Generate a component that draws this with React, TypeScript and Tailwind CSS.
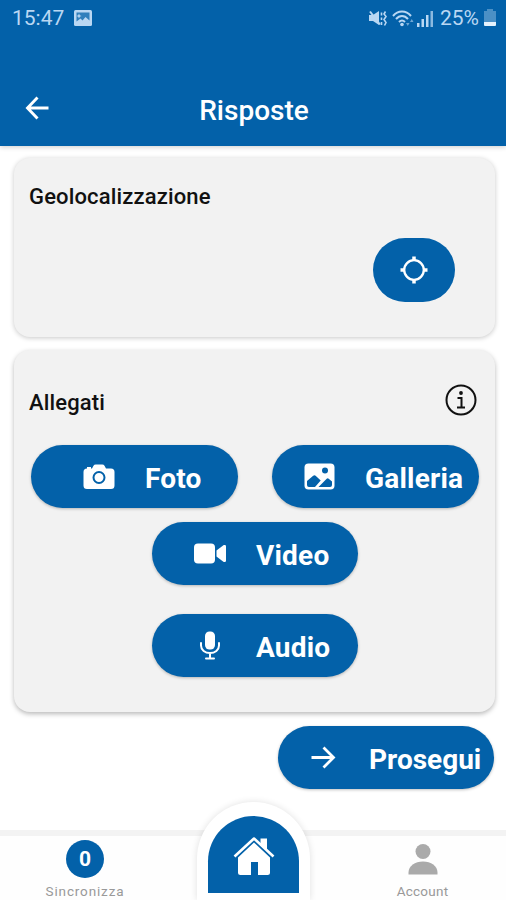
import type { ReactNode } from "react"

type ActionButtonProps = {
    label: string,
    icon: ReactNode,
    className: string
}

const ActionButton = ({ label, icon, className }: ActionButtonProps) => {
    return (
        <button className={`h-[63px] flex items-center rounded-full bg-[#0361a9] text-white shadow-[0_1px_3px_rgba(0,0,0,0.25)] ${className}`}>
            <span className="w-8 shrink-0 flex justify-center">{icon}</span>
            <span className="ml-[30px] mt-[5px] text-[28px] leading-8 font-bold whitespace-nowrap">{label}</span>
        </button>
    )
}

const CameraIcon = () => (
    <svg width="32" height="26" viewBox="0 0 32 26" fill="none">
        <path fill="#fff" fillRule="evenodd" d="M4 4.500h5l1.500-2.700A2.500 2.500 0 0 1 12.700.5h6.600a2.500 2.500 0 0 1 2.200 1.300L23 4.500h5A3.500 3.500 0 0 1 31.500 8v13.500A3.500 3.500 0 0 1 28 25H4a3.500 3.500 0 0 1-3.500-3.500V8A3.500 3.500 0 0 1 4 4.500z" />
        <path fill="#fff" d="M4 3h4v3H4z" />
        <circle cx="16" cy="13.500" r="5.500" stroke="#0361a9" strokeWidth="2" />
    </svg>
)

const GalleryIcon = () => (
    <svg width="31" height="27" viewBox="0 0 31 27">
        <rect x=".5" y=".5" width="30" height="26" rx="4" fill="#fff" />
        <circle cx="21" cy="7.500" r="3" fill="#0361a9" />
        <path fill="#0361a9" d="M3 18l6.200-5.200a2 2 0 0 1 2.700.1l4.800 4.500L11 24H5a2 2 0 0 1-2-2zM14.500 24l8.200-8.200a1.500 1.500 0 0 1 2 0L28 18.500V22a2 2 0 0 1-2 2z" />
    </svg>
)

const VideoIcon = () => (
    <svg width="32" height="21" viewBox="0 0 32 21" fill="#fff">
        <rect x="0" y=".5" width="21" height="20" rx="4" />
        <path d="M22.500 7.500l6.900-5.200c1-.7 2.600-.3 2.600 1v14.400c0 1.300-1.600 1.700-2.600 1l-6.900-5.200z" />
    </svg>
)

const MicIcon = () => (
    <svg width="22" height="29" viewBox="0 0 22 29" fill="none" stroke="#fff" strokeWidth="2" strokeLinecap="round">
        <rect x="6" y=".5" width="10" height="18" rx="4.500" fill="#fff" stroke="none" />
        <path d="M2 12v2.500c0 4.500 4 7.500 9 7.500s9-3 9-7.500V12M11 22v5M7 27.500h8" />
    </svg>
)

const ArrowIcon = () => (
    <svg width="25" height="23" viewBox="0 0 25 23" fill="none" stroke="#fff" strokeWidth="2.800">
        <path d="M.5 11.500h22M12.500 1.500l10 10-10 10" />
    </svg>
)

const BackIcon = () => (
    <svg className="-mt-[3px]" width="24" height="24" viewBox="0 0 24 24" fill="none" stroke="#fff" strokeWidth="2.900">
        <path d="M23.500 12H3M12.500 1.500L2.500 12l10 10.500" />
    </svg>
)

const TargetIcon = () => (
    <svg width="28" height="28" viewBox="0 0 28 28" fill="none" stroke="#fff">
        <circle cx="14" cy="14" r="9.800" strokeWidth="2.300" />
        <path strokeWidth="3.500" d="M14 .5v4M14 23.500v4M.5 14h4M23.500 14h4" />
    </svg>
)

const InfoIcon = () => (
    <svg width="32" height="32" viewBox="0 0 32 32" fill="none" stroke="#111">
        <circle cx="16" cy="16" r="14.500" strokeWidth="2" />
        <circle cx="16" cy="9" r="1.900" fill="#111" stroke="none" />
        <path strokeWidth="2" d="M12.500 14h4v9M12 23.500h8" />
    </svg>
)

const StatusBar = () => {
    return (
        <div className="h-9 pl-3 pr-[10px] flex items-center text-[#b9d7f3]">
            <span className="mt-px text-[21px]">15:47</span>
            <svg className="ml-[10px]" width="18" height="16" viewBox="0 0 18 16">
                <rect width="18" height="16" rx="1.500" fill="currentColor" />
                <path fill="#0361a9" d="M2.500 2.500h13v8l-4-3.500-3 3.500-2-2-4 3z" opacity=".75" />
                <path fill="currentColor" d="M5 3.500l.8 1.700 1.700.8-1.700.8L5 8.500l-.8-1.700L2.500 6l1.700-.8z" />
            </svg>
            <svg className="ml-auto" width="18" height="17" viewBox="0 0 18 17" fill="none" stroke="currentColor">
                <path fill="currentColor" stroke="none" d="M0 5h4l6-4v14l-6-4H0z" />
                <path strokeWidth="2" d="M1 1.500l10 13" />
                <path strokeWidth="1.600" d="M12.500 2.500v3M12.500 7.500v2.500M12.500 12v3M16.500 1.500L15 4l2 2.500-2 3 2 3-1.500 3" />
            </svg>
            <svg className="ml-[5px]" width="22" height="17" viewBox="0 0 22 17" fill="none" stroke="currentColor" strokeWidth="2">
                <path d="M1 6c5-6 13-6 18 0M4 9c3.500-4 8.500-4 12 0M7 12c2-2 4-2 6 0" />
                <circle cx="10" cy="14.500" r="1.800" fill="currentColor" stroke="none" />
                <path fill="currentColor" stroke="none" d="M14 13h3.500L15.800 16zM18 12h3.500l-1.700-3z" opacity=".6" />
            </svg>
            <svg className="ml-[3px]" width="16" height="17" viewBox="0 0 16 17" fill="currentColor">
                <path d="M0 13h2.500v4H0zM4.500 9H7v8H4.500zM9 5h2.500v12H9z" />
                <path d="M13.500 1H16v16h-2.500z" opacity=".75" />
            </svg>
            <span className="ml-[7px] mt-px text-[21px]">25%</span>
            <svg className="ml-[5px]" width="12" height="18" viewBox="0 0 12 18" fill="currentColor">
                <path d="M3 0h6v2h3v11H0V2h3z" opacity=".4" />
                <path fill="#e5f2fd" d="M0 13h12v3a1 1 0 0 1-1 1H1a1 1 0 0 1-1-1z" />
            </svg>
        </div>
    )
}

const BottomBar = () => {
    return (
        <nav className="mt-auto h-[70px] shrink-0 flex border-t-[6px] border-[#f3f3f3] bg-[#fefefe] text-[#999]">
            <div className="w-[169px] pt-1 pl-px flex flex-col items-center">
                <div className="w-[38px] h-[38px] pt-px flex items-center justify-center rounded-full bg-[#0361a9] text-white text-[21px] font-bold">0</div>
                <div className="mt-[5px] text-[13.500px] leading-4 tracking-[0.85px]">Sincronizza</div>
            </div>
            <div className="ml-7 w-[113px] h-[98px] -mt-[34px] pt-[14px] flex justify-center rounded-t-full bg-white shadow-[0_0_7px_rgba(0,0,0,0.12)]">
                <div className="w-[91px] h-[77px] pt-5 flex justify-center rounded-t-[46px] bg-[#0361a9]">
                    <svg width="42" height="40" viewBox="0 0 42 40" fill="#fff">
                        <path d="M27.500 2.500h6.500v12l-6.500-6z" />
                        <path fill="none" stroke="#fff" strokeWidth="2.600" strokeLinejoin="round" d="M1.500 20.500L21 2.500l19.500 18" />
                        <path d="M21 6.500l16 15V36.500a2.500 2.500 0 0 1-2.500 2.500H25V26h-7v13H7.500A2.500 2.500 0 0 1 5 36.500v-15z" />
                    </svg>
                </div>
            </div>
            <div className="ml-[29px] w-[167px] pt-2 flex flex-col items-center">
                <svg width="30" height="31" viewBox="0 0 30 31" fill="#aaa">
                    <circle cx="15" cy="7.500" r="7.500" />
                    <path d="M.5 30.500v-2C.5 22 7 17.500 15 17.500S29.500 22 29.500 28.500v2z" />
                </svg>
                <div className="mt-2 text-[13.500px] leading-4 tracking-[0.25px]">Account</div>
            </div>
        </nav>
    )
}

const App = () => {
    return (
        <div className="w-[506px] h-[900px] flex flex-col overflow-hidden bg-white font-['Roboto',sans-serif]">
            <header className="h-[146px] shrink-0 bg-[#0361a9] text-white shadow-[0_1px_5px_rgba(0,0,0,0.2)]">
                <StatusBar />
                <div className="mt-[52px] h-10 px-[25px] grid grid-cols-3 items-center">
                    <BackIcon />
                    <h1 className="ml-[2px] mt-[3px] text-center text-[28px] leading-10 font-medium">Risposte</h1>
                </div>
            </header>

            <main className="pt-3 pl-[14px] pr-[11px] flex flex-col">
                <section className="h-[179px] pt-[25px] px-[15px] rounded-2xl bg-[#f2f2f2] shadow-[0_1px_5px_rgba(0,0,0,0.22)]">
                    <h2 className="text-[22px] leading-7 font-medium tracking-[0.15px] text-[#111]">Geolocalizzazione</h2>
                    <button className="mt-[27px] ml-auto mr-[25px] w-[82px] h-16 flex items-center justify-center rounded-full bg-[#0361a9]">
                        <TargetIcon />
                    </button>
                </section>

                <section className="mt-[13px] h-[362px] pt-[34px] rounded-2xl bg-[#f2f2f2] shadow-[0_2px_5px_rgba(0,0,0,0.28)]">
                    <div className="pl-[15px] pr-[18px] h-8 flex justify-between items-center">
                        <h2 className="mt-[5px] text-[22px] leading-7 font-medium tracking-[0.15px] text-[#111]">Allegati</h2>
                        <InfoIcon />
                    </div>
                    <div className="mt-[29px] pl-[17px] pr-4 flex justify-between">
                        <ActionButton label="Foto" icon={<CameraIcon />} className="w-[207px] pl-[52px] tracking-[0.2px]" />
                        <ActionButton label="Galleria" icon={<GalleryIcon />} className="w-[207px] pl-[31px] tracking-[0.2px]" />
                    </div>
                    <div className="mt-[14px] pl-[138px] flex flex-col items-start gap-[29px]">
                        <ActionButton label="Video" icon={<VideoIcon />} className="w-[206px] pl-[42px] tracking-[0.2px]" />
                        <ActionButton label="Audio" icon={<MicIcon />} className="w-[206px] pl-[42px] tracking-[0.2px]" />
                    </div>
                </section>

                <ActionButton label="Prosegui" icon={<ArrowIcon />} className="mt-[14px] ml-auto mr-px w-[216px] pl-[29px]" />
            </main>

            <BottomBar />
        </div>
    )
}

export default App
